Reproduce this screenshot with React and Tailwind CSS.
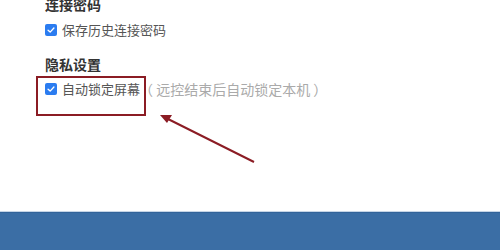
import React from "react";

function Check() {
  return (
    <span className="flex items-center justify-center w-[12px] h-[12px] rounded-[2px] bg-[#2b7cf0] shrink-0">
      <svg viewBox="0 0 12 12" className="w-[10px] h-[10px]">
        <path d="M2.5 6.2 L5 8.5 L9.5 3.6" fill="none" stroke="white" strokeWidth="1.6" strokeLinecap="round" strokeLinejoin="round" />
      </svg>
    </span>
  );
}

export default function App() {
  return (
    <div
      className="relative w-[500px] h-[250px] bg-white overflow-hidden flex flex-col"
      style={{ fontFamily: '"Noto Sans CJK SC", "Noto Sans", sans-serif' }}
    >
      {/* SETTINGS */}
      <div className="flex-1 pl-[45px]">
        <div className="-mt-[6px] text-[14px] leading-[20px] font-bold text-[#333]">连接密码</div>
        <div className="mt-[6px] flex items-center gap-[5px] h-[20px] text-[13px] text-[#555]">
          <Check />
          <span>保存历史连接密码</span>
        </div>

        <div className="mt-[14px] text-[14px] leading-[20px] font-bold text-[#333]">隐私设置</div>
        <div className="mt-[5px] flex items-center gap-[5px] h-[20px] text-[13px] text-[#555]">
          <Check />
          <span>自动锁定屏幕</span>
          <span className="text-[14px] text-[#aaa] -ml-[6px]">（ 远控结束后自动锁定本机 ）</span>
        </div>
      </div>

      {/* ANNOTATION */}
      <div className="absolute left-[36px] top-[76px] w-[110px] h-[40px] border-2 border-[#8b1c24]" />
      <svg className="absolute left-0 top-0" width="500" height="250" viewBox="0 0 500 250">
        <line x1="254" y1="162" x2="166" y2="118" stroke="#8b1c24" strokeWidth="2" />
        <polygon points="160,115 172,115 167,123" fill="#8b1c24" />
      </svg>

      {/* BOTTOM BAR */}
      <div className="h-[39px] bg-[#3b6ea5] border-t border-[#c6d5e6] shadow-[inset_0_1px_0_#33649a]" />
    </div>
  );
}
